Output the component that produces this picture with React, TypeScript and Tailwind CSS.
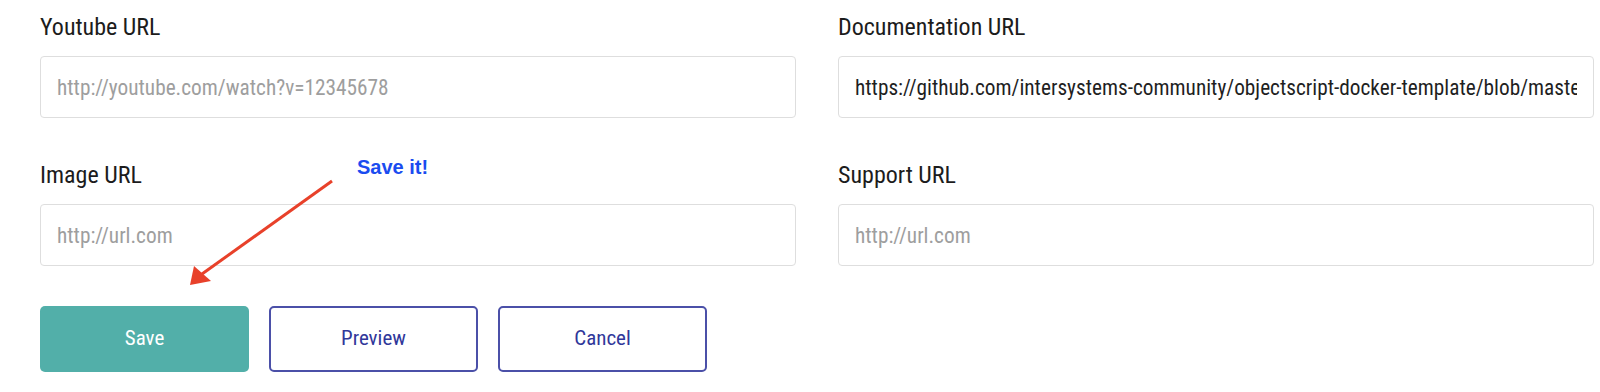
import React from "react";

const font = { fontFamily: '"Roboto Condensed", Roboto, "Liberation Sans", sans-serif' };

function Field({ label, placeholder, value }: { label: string; placeholder: string; value?: string }) {
  return (
    <div className="flex flex-col">
      <label className="text-[24px] leading-[28px] text-[#1c1c1c]">{label}</label>
      <input
        type="text"
        readOnly
        placeholder={placeholder}
        defaultValue={value}
        className="mt-[15px] h-[62px] w-full rounded-[4px] border border-[#dedede] bg-white px-[16px] text-[21.3px] text-[#1f1f1f] outline-none placeholder:text-[#9e9e9e]"
        style={font}
      />
    </div>
  );
}

export default function App() {
  return (
    <div className="relative h-[392px] w-[1600px] overflow-hidden bg-white pl-[40px] pt-[13px]" style={font}>
      <div className="grid grid-cols-[756px_756px] gap-x-[42px] gap-y-[43px]">
        <Field label="Youtube URL" placeholder="http://youtube.com/watch?v=12345678" />
        <Field
          label="Documentation URL"
          placeholder="http://url.com"
          value="https://github.com/intersystems-community/objectscript-docker-template/blob/master/README.md"
        />
        <Field label="Image URL" placeholder="http://url.com" />
        <Field label="Support URL" placeholder="http://url.com" />
      </div>

      <div className="mt-[40px] flex gap-[20px]">
        <button className="h-[66px] w-[209px] rounded-[5px] bg-[#52afa9] text-[21px] font-normal text-white">
          Save
        </button>
        <button className="h-[66px] w-[209px] rounded-[5px] border-2 border-[#4b50a8] bg-white text-[21px] font-normal text-[#30379a]">
          Preview
        </button>
        <button className="h-[66px] w-[209px] rounded-[5px] border-2 border-[#4b50a8] bg-white text-[21px] font-normal text-[#30379a]">
          Cancel
        </button>
      </div>

      {/* annotation */}
      <span
        className="absolute left-[357px] top-[156px] text-[20px] font-bold leading-[23px] text-[#1a4cf0]"
        style={{ fontFamily: '"Liberation Sans", Arial, sans-serif' }}
      >
        Save it!
      </span>
      <svg className="pointer-events-none absolute left-0 top-0" width="1600" height="392">
        <line x1="332" y1="181" x2="202" y2="274" stroke="#e8412a" strokeWidth="3" />
        <polygon points="190,285 194,266 211,281" fill="#e8412a" />
      </svg>
    </div>
  );
}
